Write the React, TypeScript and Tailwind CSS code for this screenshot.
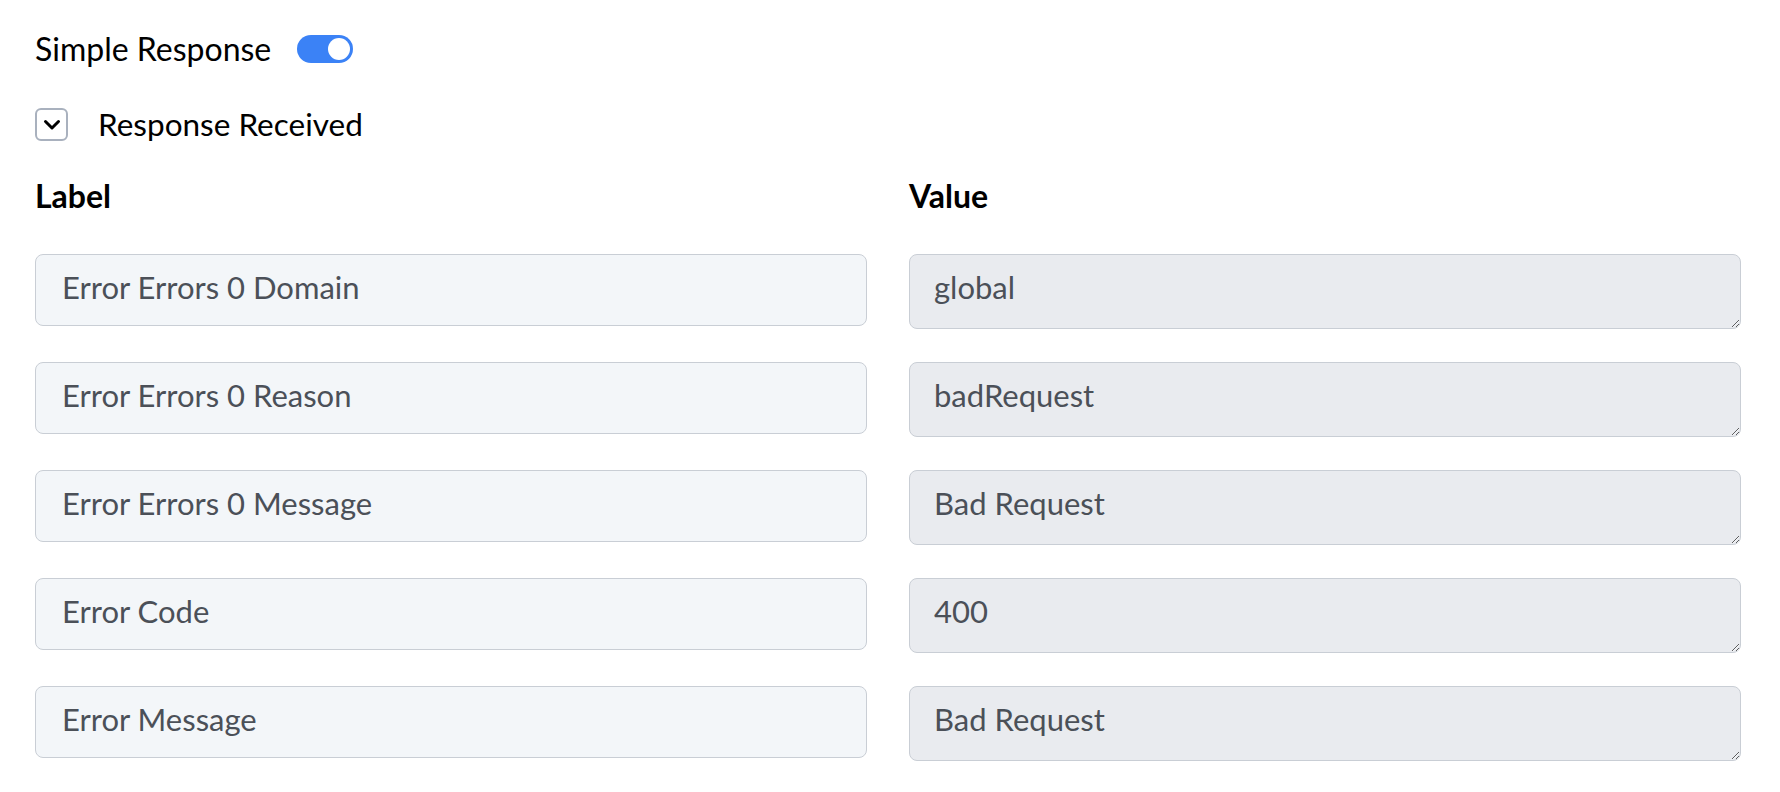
const fields = [
  { label: 'Error Errors 0 Domain', value: 'global' },
  { label: 'Error Errors 0 Reason', value: 'badRequest' },
  { label: 'Error Errors 0 Message', value: 'Bad Request' },
  { label: 'Error Code', value: '400' },
  { label: 'Error Message', value: 'Bad Request' },
];

function Toggle({ on }: { on: boolean }) {
  return (
    <button
      type="button"
      className={`flex h-[28px] w-[56px] items-center rounded-full px-[3px] ${on ? 'justify-end bg-[#3b82f6]' : 'justify-start bg-gray-300'}`}>
      <span className="h-[22px] w-[22px] rounded-full bg-white" />
    </button>
  );
}

export default function App() {
  return (
    <div className="min-h-screen bg-white pl-[35px] pr-[39px] pt-[33px] font-['Lato',sans-serif] text-black">
      {/* Simple response switch */}
      <div className="flex h-[32px] items-center gap-[26px]">
        <span className="text-[32px] leading-none">Simple Response</span>
        <Toggle on />
      </div>

      {/* Collapsible section header */}
      <div className="mt-[43px] flex h-[33px] items-center gap-[30px]">
        <button type="button"
          className="flex h-[33px] w-[33px] items-center justify-center rounded-md border-2 border-[#a9b1be] bg-white">
          <svg width="20" height="12" viewBox="0 0 20 12" fill="none">
            <polyline points="3.5,2.5 10,9 16.5,2.5" stroke="#000" strokeWidth="3" strokeLinecap="round" strokeLinejoin="round" />
          </svg>
        </button>
        <span className="text-[31.5px] leading-none">Response Received</span>
      </div>

      <div className="mt-[37px] mb-[40px] grid grid-cols-2 gap-x-[42px]">
        <div className="h-[36px] text-[32px] font-bold leading-[36px]">Label</div>
        <div className="h-[36px] text-[32px] font-bold leading-[36px]">Value</div>
      </div>

      <div className="grid grid-cols-2 gap-x-[42px] gap-y-[33px]">
        {fields.map((f) => (
          <div key={f.label} className="contents">
            <input
              type="text"
              readOnly
              value={f.label}
              className="h-[72px] w-full rounded-lg border border-[#c9ced5] bg-[#f3f6f9] pl-[26px] pb-[6px] text-[31px] text-[#4b5058] outline-none"
            />
            <textarea
              readOnly
              rows={1}
              value={f.value}
              className="h-[75px] w-full rounded-lg border border-[#c9ced5] bg-[#e9ebef] pl-[24px] pt-[10px] text-[31px] leading-[44px] text-[#4b5058] outline-none"
            />
          </div>
        ))}
      </div>
    </div>
  );
}
